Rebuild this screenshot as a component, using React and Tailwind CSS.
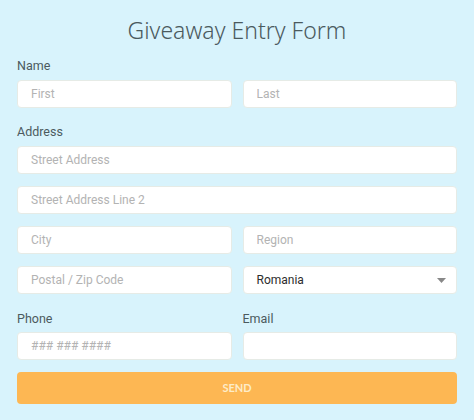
import React from "react";

const inputCls =
  "h-[28px] w-full rounded-[4px] border border-[#e6ebe6] bg-white px-[13px] text-[12px] text-[#333] placeholder:text-[#b3b3b3] outline-none";

function Field({ placeholder }) {
  return <input className={inputCls} placeholder={placeholder} style={{ fontFamily: "Roboto, sans-serif" }} />;
}

export default function App() {
  return (
    <div className="min-h-[420px] w-[474px] bg-[#d8f3fc] px-[17px] pt-[14px]" style={{ fontFamily: "Roboto, sans-serif" }}>
      <h1
        className="h-[32px] text-center text-[23px] leading-[32px] font-light text-[#4b5a5e]"
        style={{ fontFamily: "'Noto Sans', sans-serif" }}
      >
        Giveaway Entry Form
      </h1>
      <div className="mt-[12px] h-[16px] text-[12.5px] leading-[16px] text-[#4b5a5e]">Name</div>
      <div className="mt-[6px] grid grid-cols-2 gap-x-[11px]">
        <Field placeholder="First" />
        <Field placeholder="Last" />
      </div>
      <div className="mt-[16px] h-[16px] text-[12.5px] leading-[16px] text-[#4b5a5e]">Address</div>
      <div className="mt-[6px] flex flex-col gap-[12px]">
        <Field placeholder="Street Address" />
        <Field placeholder="Street Address Line 2" />
        <div className="grid grid-cols-2 gap-x-[11px]">
          <Field placeholder="City" />
          <Field placeholder="Region" />
        </div>
        <div className="grid grid-cols-2 gap-x-[11px]">
          <Field placeholder="Postal / Zip Code" />
          <div className="flex h-[28px] items-center justify-between rounded-[4px] border border-[#e6ebe6] bg-white pl-[13px] pr-[10px]">
            <span className="text-[12px] font-normal text-[#2d2d2d]">Romania</span>
            <svg width="9" height="5" viewBox="0 0 9 5">
              <path d="M0 0 L9 0 L4.5 5 Z" fill="#888" />
            </svg>
          </div>
        </div>
      </div>
      <div className="mt-[17px] grid grid-cols-2 gap-x-[11px]">
        <div className="h-[16px] text-[12.5px] leading-[16px] text-[#4b5a5e]">Phone</div>
        <div className="h-[16px] text-[12.5px] leading-[16px] text-[#4b5a5e]">Email</div>
      </div>
      <div className="mt-[5px] grid grid-cols-2 gap-x-[11px]">
        <Field placeholder="### ### ####" />
        <Field placeholder="" />
      </div>
      <button
        className="mt-[12px] h-[32px] w-full rounded-[4px] bg-[#fdb753] text-[11px] font-bold text-[#fdecc8]"
        style={{ fontFamily: "Lato, sans-serif" }}
      >
        SEND
      </button>
    </div>
  );
}
